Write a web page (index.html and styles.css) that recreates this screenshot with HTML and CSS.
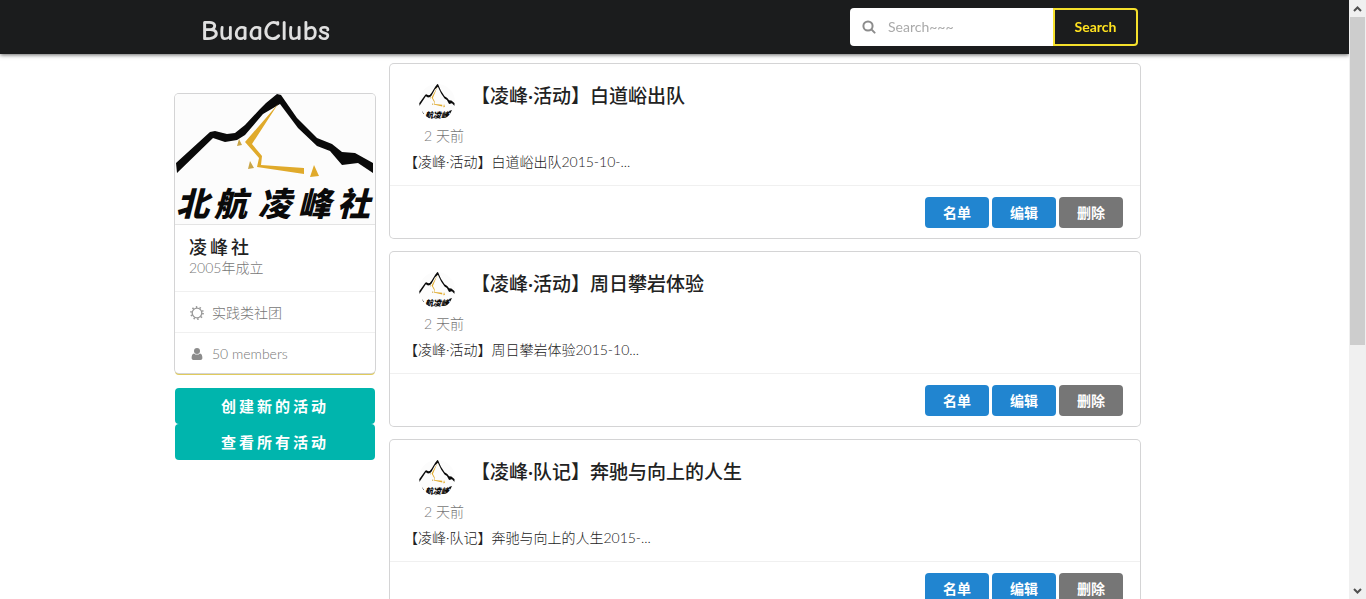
FILE: index.html
```
<!DOCTYPE html>
<html lang="zh-CN">

<head>
	<meta charset="UTF-8">
	<meta name="viewport" content="width=device-width, initial-scale=1">
	<title>BuaaClubs</title>
	<link rel="stylesheet" href="styles.css">
</head>

<body>
	<!-- 公用图形 -->
	<svg class="defs" width="0" height="0" aria-hidden="true">
		<defs>
			<g id="mountain">
				<path fill="#0a0a0a" d="M1 69L35 38L40 37L52 40L60 39L70 31L85 15L91 9L102 0L106 1L122 24L142 44L157 50L167 58L180 59L198 69V79L183 69L167 71L155 57L142 52L123 34L105 10L88 20L70 41L62 46L50 48L38 44L2 79Z" />
				<path fill="#e0aa2b" d="M103 10L77 50L87 62L86 71L129 74V80L82 73L84 64L70 48Z" />
				<path fill="#e0aa2b" d="M139 71L144 82L135 83Z" />
				<path fill="#c9a548" d="M64 45L67 51L62 52ZM75 67L79 74L73 75Z" />
			</g>
			<symbol id="avatar" viewBox="0 0 36 36">
				<rect width="36" height="36" fill="#fcfcfc" />
				<use href="#mountain" transform="scale(.18 .28)" />
				<text class="brush" font-size="8" y="34" x="6 14 22">航凌峰</text>
				<path fill="#0a0a0a" d="M3 27L5 30L4 30ZM30 27L33 26L31 30Z" />
			</symbol>
		</defs>
	</svg>

	<div class="page">
		<div class="view">
			<header class="topbar">
				<div class="container topbar-inner">
					<a class="brand" href="#">BuaaClubs</a>
					<form class="search" onsubmit="return false">
						<label class="search-box">
							<svg width="14" height="14" viewBox="0 0 14 14" fill="none" stroke="#8c8c8c" stroke-width="2" aria-hidden="true">
								<circle cx="6" cy="6" r="4.6" />
								<path d="M9.4 9.4L12.6 12.6" stroke-linecap="round" />
							</svg>
							<input type="text" placeholder="Search~~~" aria-label="Search">
						</label>
						<button type="submit">Search</button>
					</form>
				</div>
			</header>

			<div class="container columns">
				<aside class="side">
					<div class="card club">
						<svg class="club-logo" viewBox="0 0 200 130" role="img" aria-label="北航凌峰社">
							<use href="#mountain" />
							<text class="brush" font-size="33" y="122" x="1 39 83 123 162">北航凌峰社</text>
						</svg>
						<div class="club-info">
							<h2>凌峰社</h2>
							<p>2005年成立</p>
						</div>
						<div class="club-extra">
							<svg width="14" height="14" viewBox="0 0 14 14" fill="none" stroke="#999" aria-hidden="true">
								<circle cx="7" cy="7" r="4.8" stroke-width="1.3" />
								<circle cx="7" cy="7" r="6" stroke-width="1.8" stroke-dasharray="1.4 2.37" />
							</svg>
							<span>实践类社团</span>
						</div>
						<div class="club-extra">
							<svg width="14" height="14" viewBox="0 0 14 14" fill="#8c8c8c" aria-hidden="true">
								<circle cx="7" cy="4" r="3" />
								<path d="M4 6.4C2.2 6.8 1.6 8.6 1.6 11C1.6 12.3 2.4 13 3.5 13H10.5C11.6 13 12.4 12.3 12.4 11C12.4 8.6 11.8 6.8 10 6.4C8.4 8 5.6 8 4 6.4Z" />
							</svg>
							<span>50 members</span>
						</div>
					</div>
					<div class="side-actions">
						<button type="button">创建新的活动</button>
						<button type="button">查看所有活动</button>
					</div>
				</aside>

				<main class="feed">
					<article class="card post">
						<div class="post-body">
							<div class="post-head">
								<svg class="avatar" aria-hidden="true"><use href="#avatar" /></svg>
								<h3>【凌峰·活动】白道峪出队</h3>
							</div>
							<p class="post-time">2 天前</p>
							<p class="post-text">【凌峰·活动】白道峪出队2015-10-...</p>
						</div>
						<div class="post-actions">
							<button type="button">名单</button>
							<button type="button">编辑</button>
							<button type="button" class="grey">删除</button>
						</div>
					</article>

					<article class="card post">
						<div class="post-body">
							<div class="post-head">
								<svg class="avatar" aria-hidden="true"><use href="#avatar" /></svg>
								<h3>【凌峰·活动】周日攀岩体验</h3>
							</div>
							<p class="post-time">2 天前</p>
							<p class="post-text">【凌峰·活动】周日攀岩体验2015-10...</p>
						</div>
						<div class="post-actions">
							<button type="button">名单</button>
							<button type="button">编辑</button>
							<button type="button" class="grey">删除</button>
						</div>
					</article>

					<article class="card post">
						<div class="post-body">
							<div class="post-head">
								<svg class="avatar" aria-hidden="true"><use href="#avatar" /></svg>
								<h3>【凌峰·队记】奔驰与向上的人生</h3>
							</div>
							<p class="post-time">2 天前</p>
							<p class="post-text">【凌峰·队记】奔驰与向上的人生2015-...</p>
						</div>
						<div class="post-actions">
							<button type="button">名单</button>
							<button type="button">编辑</button>
							<button type="button" class="grey">删除</button>
						</div>
					</article>
				</main>
			</div>
		</div>

		<!-- 滚动条 -->
		<div class="scrollbar">
			<button type="button" aria-label="向上滚动">
				<svg width="9" height="6" viewBox="0 0 9 6"><path d="M1 5L4.5 1.5L8 5" /></svg>
			</button>
			<div class="track">
				<div class="thumb"></div>
			</div>
			<button type="button" aria-label="向下滚动">
				<svg width="9" height="6" viewBox="0 0 9 6"><path d="M1 1L4.5 4.5L8 1" /></svg>
			</button>
		</div>
	</div>
</body>

</html>
```
FILE: styles.css
```
* {
	box-sizing: border-box;
	margin: 0;
	padding: 0;
}

body {
	background: #fff;
	color: #222;
	font: 14px/20px Lato, "Noto Sans CJK SC", sans-serif;
}

button,
input {
	font: inherit;
	border: 0;
}

button {
	cursor: pointer;
}

.defs {
	position: absolute;
}

.page {
	display: grid;
	grid-template-columns: 1fr 17px;
	height: 100vh;
}

.view {
	overflow-y: auto;
	scrollbar-width: none;
}

.container {
	max-width: 999px;
	margin: 0 auto;
	padding-right: 34px;
}

/* 顶部导航 */
.topbar {
	position: sticky;
	top: 0;
	z-index: 1;
	background: #1b1c1d;
	box-shadow: 0 1px 4px rgba(0, 0, 0, .6);
}

.topbar-inner {
	display: flex;
	align-items: center;
	justify-content: space-between;
	height: 54px;
	padding-left: 26px;
	padding-right: 36px;
}

.brand {
	padding-top: 8px;
	color: #e0e0e0;
	font: 700 29px/36px "Comic Sans MS", "Comic Neue", "Noto Sans", sans-serif;
	text-decoration: none;
}

.search {
	display: flex;
	height: 38px;
}

.search-box {
	display: flex;
	align-items: center;
	gap: 12px;
	width: 203px;
	padding-left: 12px;
	background: #fff;
	border-radius: 4px 0 0 4px;
}

.search-box input {
	flex: 1;
	min-width: 0;
	background: none;
	outline: 0;
}

.search-box input::placeholder {
	color: #aaa;
}

.search button {
	width: 85px;
	background: none;
	border: 2px solid #f5e02c;
	border-radius: 0 4px 4px 0;
	color: #ffe21f;
	font-weight: 700;
}

/* 两栏 */
.columns {
	display: grid;
	grid-template-columns: 200px 1fr;
	gap: 15px;
	align-items: start;
	padding-top: 10px;
	padding-bottom: 14px;
}

.card {
	background: #fff;
	border-radius: 4px;
	box-shadow: 0 0 0 1px #d4d4d5;
}

/* 社团 */
.side {
	padding-top: 30px;
}

.club {
	overflow: hidden;
	box-shadow: 0 0 0 1px #d4d4d5, 0 2px 0 0 #e0cb5c;
}

.club-logo {
	display: block;
	width: 100%;
	background: #fcfcfc;
}

.brush {
	font-family: "Noto Sans CJK SC", sans-serif;
	font-style: italic;
	font-weight: 900;
	fill: #0a0a0a;
}

.club-info {
	height: 67px;
	padding: 11px 14px;
	border-top: 1px solid #e4e4e4;
}

.club-info h2 {
	color: #222;
	font-size: 18px;
	font-weight: 500;
	line-height: 22px;
	letter-spacing: 3px;
}

.club-info p,
.club-extra {
	color: #777;
	font-weight: 300;
}

.club-extra {
	display: flex;
	align-items: center;
	gap: 8px;
	height: 41px;
	padding: 1px 15px 0;
	border-top: 1px solid #f0f0f0;
}

.side-actions {
	margin-top: 15px;
}

.side-actions button {
	display: block;
	width: 100%;
	height: 36px;
	background: #00b5ad;
	border-radius: 4px;
	color: #fff;
	font-size: 15px;
	font-weight: 700;
	letter-spacing: 3px;
}

/* 活动列表 */
.feed {
	display: grid;
	gap: 14px;
}

.post-body {
	padding: 18px 14px 13px;
}

.post-head {
	display: flex;
	gap: 16px;
	padding-left: 15px;
}

.avatar {
	width: 36px;
	height: 36px;
	margin-top: 2px;
	border-radius: 50%;
}

.post-head h3 {
	color: #222;
	font-size: 19px;
	font-weight: 500;
	line-height: 28px;
}

.post-time {
	margin-top: 6px;
	padding-left: 20px;
	color: #777;
	font-weight: 300;
}

.post-text {
	margin-top: 6px;
	font-weight: 300;
}

.post-actions {
	display: flex;
	justify-content: flex-end;
	gap: 3px;
	padding: 11px 17px 10px;
	border-top: 1px solid #f0f0f0;
}

.post-actions button {
	width: 64px;
	height: 31px;
	background: #2185d0;
	border-radius: 4px;
	color: #fff;
	font-weight: 700;
	line-height: 20px;
}

.post-actions .grey {
	background: #767676;
}

/* 滚动条 */
.scrollbar {
	display: flex;
	flex-direction: column;
	background: #f0f0f0;
}

.scrollbar button {
	display: flex;
	align-items: center;
	justify-content: center;
	height: 17px;
	background: none;
}

.scrollbar path {
	fill: none;
	stroke: #505050;
	stroke-width: 2;
}

.track {
	flex: 1;
	padding: 0 1px;
}

.thumb {
	height: 58%;
	background: #cdcdcd;
}
```
